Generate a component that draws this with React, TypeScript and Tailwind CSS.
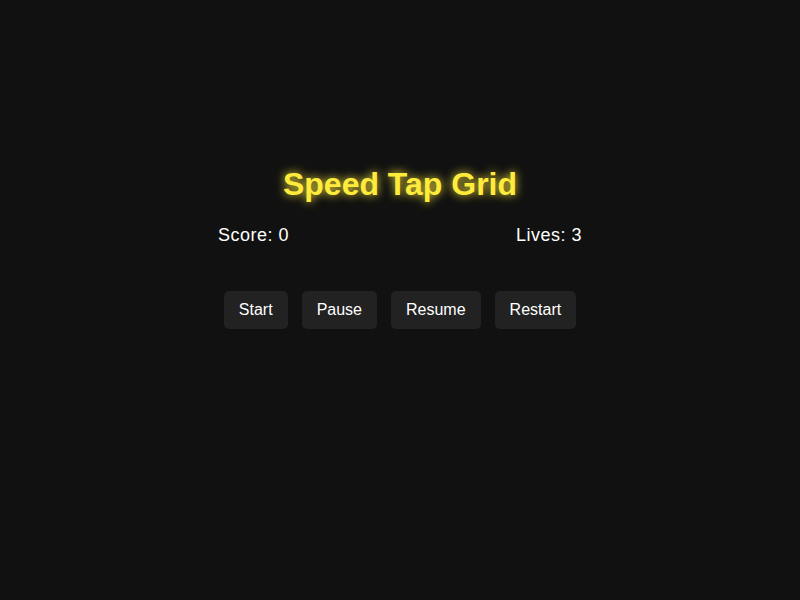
import React, { useState } from 'react';

const buttons = ['Start', 'Pause', 'Resume', 'Restart'];

const App: React.FC = () => {
    const [score] = useState(0);
    const [lives] = useState(3);

    return (
        <div className="min-h-screen w-full bg-[#111111] text-white font-['Liberation_Sans',Arial,sans-serif] flex flex-col items-center pt-[166px]">
            <h1 className="text-[32px] leading-[37px] font-bold text-[#ffeb3b] [text-shadow:0_0_10px_#ffeb3b]">
                Speed Tap Grid
            </h1>

            <div className="mt-[22px] w-[364px] flex justify-between text-[18px] leading-[21px] tracking-[0.5px]">
                <span>Score: {score}</span>
                <span>Lives: {lives}</span>
            </div>

            <div className="mt-[45px] flex gap-[14px]">
                {buttons.map(label => (
                    <button
                        key={label}
                        className="bg-[#222222] text-white text-[16px] leading-[18px] px-[15px] py-[10px] rounded-[5px]"
                    >
                        {label}
                    </button>
                ))}
            </div>
        </div>
    );
};

export default App;
